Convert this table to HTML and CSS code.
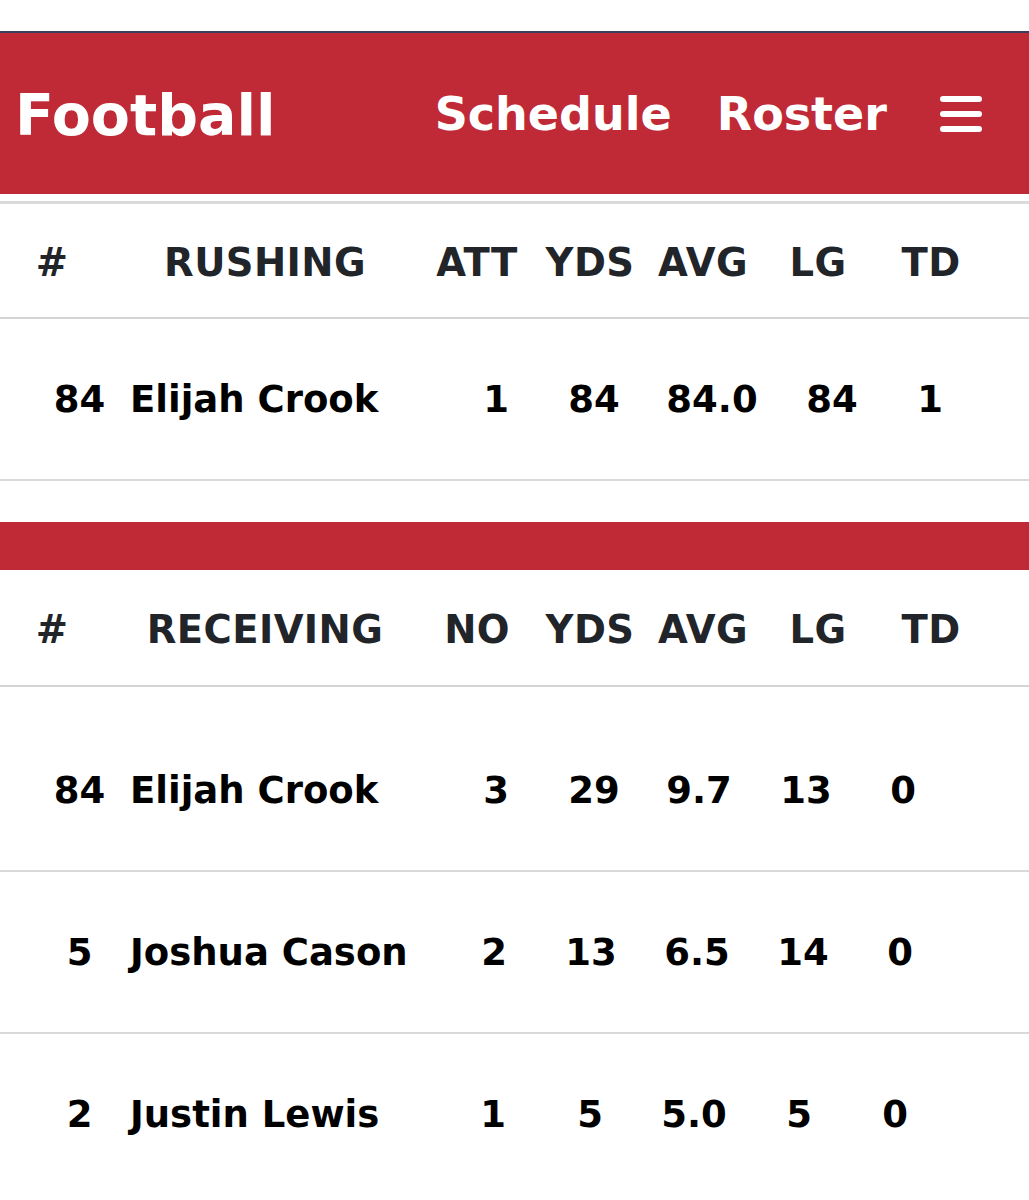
FILE: index.html
```html
<!DOCTYPE html>
<html lang="en">
<head>
<meta charset="utf-8">
<title>Football Stats</title>
<link rel="stylesheet" href="styles.css">
</head>
<body>
<div class="topbar"></div>
<header class="nav">
  <div class="brand">Football</div>
  <nav class="links">
    <span class="link">Schedule</span>
    <span class="link">Roster</span>
    <svg class="menu" width="42" height="38" viewBox="0 0 42 38" aria-label="Menu">
      <rect x="0" y="1" width="42" height="6" rx="3" fill="#fff"/>
      <rect x="0" y="16" width="42" height="6" rx="3" fill="#fff"/>
      <rect x="0" y="31" width="42" height="6" rx="3" fill="#fff"/>
    </svg>
  </nav>
</header>

<section class="stats stats-first">
  <div class="head-row">
    <div class="c">#</div>
    <div class="c">RUSHING</div>
    <div class="c">ATT</div>
    <div class="c">YDS</div>
    <div class="c">AVG</div>
    <div class="c">LG</div>
    <div class="c">TD</div>
  </div>
  <div class="data-row cols-rush">
    <div class="c">84</div>
    <div class="name">Elijah Crook</div>
    <div class="c">1</div>
    <div class="c">84</div>
    <div class="c">84.0</div>
    <div class="c">84</div>
    <div class="c">1</div>
  </div>
</section>

<div class="band"></div>

<section class="stats">
  <div class="head-row head-tall">
    <div class="c">#</div>
    <div class="c">RECEIVING</div>
    <div class="c">NO</div>
    <div class="c">YDS</div>
    <div class="c">AVG</div>
    <div class="c">LG</div>
    <div class="c">TD</div>
  </div>
  <div class="data-row row-first cols-rec1">
    <div class="c">84</div>
    <div class="name">Elijah Crook</div>
    <div class="c">3</div>
    <div class="c">29</div>
    <div class="c">9.7</div>
    <div class="c">13</div>
    <div class="c">0</div>
  </div>
  <div class="data-row cols-rec2">
    <div class="c">5</div>
    <div class="name">Joshua Cason</div>
    <div class="c">2</div>
    <div class="c">13</div>
    <div class="c">6.5</div>
    <div class="c">14</div>
    <div class="c">0</div>
  </div>
  <div class="data-row row-last cols-rec3">
    <div class="c">2</div>
    <div class="name">Justin Lewis</div>
    <div class="c">1</div>
    <div class="c">5</div>
    <div class="c">5.0</div>
    <div class="c">5</div>
    <div class="c">0</div>
  </div>
</section>
</body>
</html>
```

FILE: styles.css
```css
html, body {
  margin: 0;
  padding: 0;
  background: #ffffff;
}

body {
  font-family: "DejaVu Sans", Verdana, sans-serif;
  font-weight: bold;
}

.topbar {
  height: 31px;
  border-bottom: 2px solid #3b3e5c;
}

.nav {
  height: 161px;
  background: #bf2a36;
  color: #ffffff;
  display: flex;
  align-items: center;
  padding-left: 15px;
  padding-right: 47px;
}

.brand {
  font-size: 57px;
  line-height: 1;
  padding-top: 4px;
}

.links {
  margin-left: auto;
  display: flex;
  align-items: center;
  gap: 45px;
}

.link {
  font-size: 46px;
  line-height: 1;
}

.menu {
  display: block;
  margin-left: 8px;
}

.stats-first {
  margin-top: 7px;
  border-top: 3px solid #d9dbdb;
}

.head-row {
  height: 109px;
  padding-top: 4px;
  display: grid;
  grid-template-columns: 104px 322px 102px 124px 102px 128px 98px;
  align-items: center;
  border-bottom: 2px solid #d4d4d4;
  color: #212529;
  font-size: 38.5px;
  letter-spacing: 0.4px;
}

.head-tall {
  height: 111px;
}

.data-row {
  height: 160px;
  display: grid;
  grid-template-columns: var(--cols);
  align-items: center;
  padding-left: 31px;
  border-bottom: 2px solid #d9d9d9;
  color: #000000;
  font-size: 37px;
}

.row-first {
  height: 160px;
  padding-top: 23px;
}

.row-last {
  height: 160px;
  border-bottom: none;
}

.c {
  text-align: center;
  white-space: nowrap;
}

.name {
  text-align: left;
  white-space: nowrap;
  padding-left: 2px;
}

.cols-rush {
  --cols: 97px 312px 112px 84px 152px 88px 108px;
}

.cols-rec1 {
  --cols: 97px 312px 112px 84px 126px 88px 106px;
}

.cols-rec2 {
  --cols: 97px 312px 108px 86px 126px 86px 108px;
}

.cols-rec3 {
  --cols: 97px 312px 106px 88px 120px 90px 102px;
}

.band {
  margin-top: 41px;
  height: 48px;
  background: #bf2a36;
}
```
